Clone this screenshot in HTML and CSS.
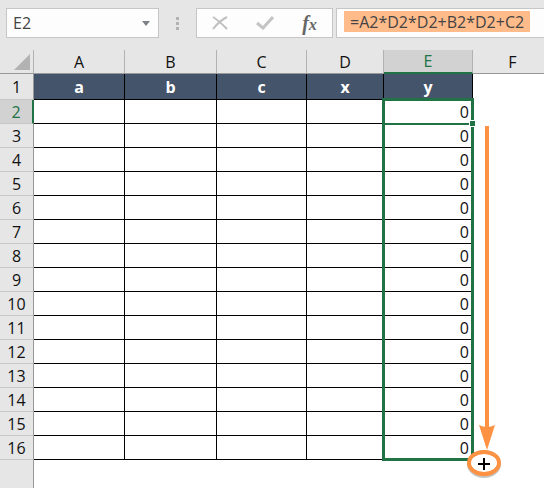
FILE: index.html
```
<!DOCTYPE html>
<html lang="en">

<head>
  <title>Quadratic - Sheet</title>
  <meta charset="UTF-8">
  <link rel="stylesheet" href="styles.css">
</head>

<body>
  <header class="formula-bar">
    <div class="box name-box">
      <input type="text" class="name-input" aria-label="Name box" value="E2">
      <button type="button" class="drop" aria-label="Named ranges">
        <svg width="8" height="5" viewBox="0 0 8 5"><path d="M0 0h8L4 5z" fill="#7d8185"/></svg>
      </button>
    </div>
    <div class="dots"><i></i><i></i><i></i></div>
    <div class="box tools">
      <button type="button" aria-label="Cancel">
        <svg width="16" height="14" viewBox="0 0 16 14" fill="none" stroke="#bfbfbf" stroke-width="2"><path d="M1 1c5 3 9 7 14 12M15 1C9 4 5 8 1 13"/></svg>
      </button>
      <button type="button" aria-label="Enter">
        <svg width="18" height="14" viewBox="0 0 18 14" fill="none" stroke="#c4c4c4" stroke-width="3"><path d="M1 7l6 5L17 1"/></svg>
      </button>
      <button type="button" class="fx" aria-label="Insert function"><b>f</b><b class="fx-x">x</b></button>
    </div>
    <div class="box formula">
      <input type="text" class="formula-input" aria-label="Formula" value="=A2*D2*D2+B2*D2+C2">
    </div>
  </header>

  <main class="sheet">
    <table>
      <colgroup>
        <col class="col-num"><col class="col-a"><col class="col-b"><col class="col-c"><col class="col-d"><col class="col-e"><col>
      </colgroup>
      <thead>
        <tr>
          <th class="corner"><svg width="16" height="16" viewBox="0 0 16 16"><path d="M16 0v16H0z" fill="#b2b2b2"/></svg></th>
          <th scope="col">A</th><th scope="col">B</th><th scope="col">C</th><th scope="col">D</th>
          <th scope="col" class="active">E</th><th scope="col">F</th>
        </tr>
      </thead>
      <tbody>
        <tr class="titles"><th scope="row">1</th><td>a</td><td>b</td><td>c</td><td>x</td><td>y</td><td class="blank"></td></tr>
        <tr><th scope="row" class="active">2</th><td></td><td></td><td></td><td></td><td>0</td><td class="blank"></td></tr>
        <tr><th scope="row">3</th><td></td><td></td><td></td><td></td><td>0</td><td class="blank"></td></tr>
        <tr><th scope="row">4</th><td></td><td></td><td></td><td></td><td>0</td><td class="blank"></td></tr>
        <tr><th scope="row">5</th><td></td><td></td><td></td><td></td><td>0</td><td class="blank"></td></tr>
        <tr><th scope="row">6</th><td></td><td></td><td></td><td></td><td>0</td><td class="blank"></td></tr>
        <tr><th scope="row">7</th><td></td><td></td><td></td><td></td><td>0</td><td class="blank"></td></tr>
        <tr><th scope="row">8</th><td></td><td></td><td></td><td></td><td>0</td><td class="blank"></td></tr>
        <tr><th scope="row">9</th><td></td><td></td><td></td><td></td><td>0</td><td class="blank"></td></tr>
        <tr><th scope="row">10</th><td></td><td></td><td></td><td></td><td>0</td><td class="blank"></td></tr>
        <tr><th scope="row">11</th><td></td><td></td><td></td><td></td><td>0</td><td class="blank"></td></tr>
        <tr><th scope="row">12</th><td></td><td></td><td></td><td></td><td>0</td><td class="blank"></td></tr>
        <tr><th scope="row">13</th><td></td><td></td><td></td><td></td><td>0</td><td class="blank"></td></tr>
        <tr><th scope="row">14</th><td></td><td></td><td></td><td></td><td>0</td><td class="blank"></td></tr>
        <tr><th scope="row">15</th><td></td><td></td><td></td><td></td><td>0</td><td class="blank"></td></tr>
        <tr><th scope="row">16</th><td></td><td></td><td></td><td></td><td>0</td><td class="blank"></td></tr>
        <tr class="rest"><th></th><td class="blank" colspan="6"></td></tr>
      </tbody>
    </table>

    <!-- selected range E2:E16 -->
    <div class="selection"></div>
    <div class="active-line"></div>
    <div class="handle"></div>

    <!-- drag arrow and fill cursor -->
    <svg class="drag" width="36" height="354" viewBox="0 0 36 354">
      <path d="M20 2V310" stroke="#ff9142" stroke-width="4"/>
      <path d="M12 301q8 4 16 0l-8 25z" fill="#ff9142"/>
      <ellipse cx="17" cy="340" rx="15" ry="12" fill="none" stroke="#8a8a8a" stroke-opacity=".5" stroke-width="4"/>
      <ellipse cx="17" cy="339" rx="15" ry="11" fill="#fff" stroke="#ff9142" stroke-width="4"/>
      <path d="M17 334v12M11 340h12" stroke="#000" stroke-width="2"/>
    </svg>
  </main>
</body>

</html>
```
FILE: styles.css
```
* {
  box-sizing: border-box;
}

body {
  margin: 0;
  min-height: 100vh;
  overflow: hidden;
  background-color: #fff;
  font-family: "Open Sans", "Noto Sans", sans-serif;
  font-size: 16px;
  color: #111;
}

button {
  border: 0;
  padding: 0;
  background: none;
  display: flex;
  align-items: center;
  justify-content: center;
}

input {
  border: 0;
  padding: 0;
  min-width: 0;
  background: none;
  font: inherit;
  color: #444;
}

/* formula bar */
.formula-bar {
  display: flex;
  height: 50px;
  padding: 8px 0 12px 6px;
  background-color: #e6e6e6;
}

.box {
  display: flex;
  align-items: center;
  border: 1px solid #c6c6c6;
  background-color: #fdfdfd;
}

.name-box {
  flex: none;
  width: 153px;
  padding: 0 8px 0 6px;
}

.name-input {
  flex: 1;
}

.dots {
  flex: none;
  width: 37px;
  display: flex;
  flex-direction: column;
  align-items: center;
  justify-content: center;
  gap: 2px;
}

.dots i {
  width: 3px;
  height: 3px;
  background-color: #b2b2b2;
}

.tools {
  flex: none;
  width: 137px;
  margin-right: 3px;
}

.tools button {
  flex: 1;
}

.fx {
  font-family: "Liberation Serif", serif;
  font-style: italic;
  font-size: 20px;
  line-height: 20px;
  color: #666;
}

.fx-x {
  font-size: 16px;
  padding-top: 4px;
}

.formula {
  flex: 1;
  min-width: 0;
  align-items: flex-start;
  border-right: 0;
  padding: 2px 14px 0 7px;
}

.formula-input {
  flex: 1;
  height: 21px;
  padding-left: 6px;
  background-color: #ffbb8a;
}

/* grid */
.sheet {
  position: relative;
}

table {
  width: 100%;
  height: calc(100vh - 50px);
  table-layout: fixed;
  border-spacing: 0;
}

.col-num { width: 34px; }
.col-a { width: 91px; }
.col-b { width: 92px; }
.col-c { width: 90px; }
.col-d { width: 77px; }
.col-e { width: 89px; }

th, td {
  height: 24px;
  padding: 0;
  line-height: 22px;
}

th {
  font-weight: normal;
  text-align: center;
  background-color: #e6e6e6;
}

thead th {
  border-bottom: 1px solid #999;
  border-right: 1px solid #b2b2b2;
}

thead th:last-child {
  border-right: 0;
  padding-left: 8px;
}

thead .active {
  background-color: #d2d2d2;
  border-bottom: 2px solid #217346;
  color: #217346;
}

.corner svg {
  display: block;
  margin-left: 14px;
}

tbody th {
  border-right: 1px solid #999;
  border-bottom: 1px solid #c6c6c6;
}

tbody .active {
  background-color: #d2d2d2;
  border-right: 2px solid #217346;
  color: #217346;
}

td {
  border-right: 1px solid #000;
  border-bottom: 1px solid #000;
  text-align: right;
  padding-right: 3px;
}

.titles th,
.titles td {
  height: 26px;
}

.titles td {
  background-color: #44546a;
  color: #fff;
  font-weight: bold;
  text-align: center;
  padding: 0;
}

.titles td.blank,
td.blank {
  border: 0;
  background-color: #fff;
}

.rest th,
.rest td {
  height: auto;
  border-bottom: 0;
}

/* overlays */
.selection {
  position: absolute;
  left: 382px;
  top: 48px;
  width: 92px;
  height: 363px;
  border: 3px solid #217346;
}

.active-line {
  position: absolute;
  left: 384px;
  top: 73px;
  width: 86px;
  height: 2px;
  background-color: #217346;
}

.handle {
  position: absolute;
  left: 469px;
  top: 70px;
  width: 7px;
  height: 7px;
  border: 1px solid #fff;
  background-color: #217346;
}

.drag {
  position: absolute;
  left: 467px;
  top: 74px;
}
```
